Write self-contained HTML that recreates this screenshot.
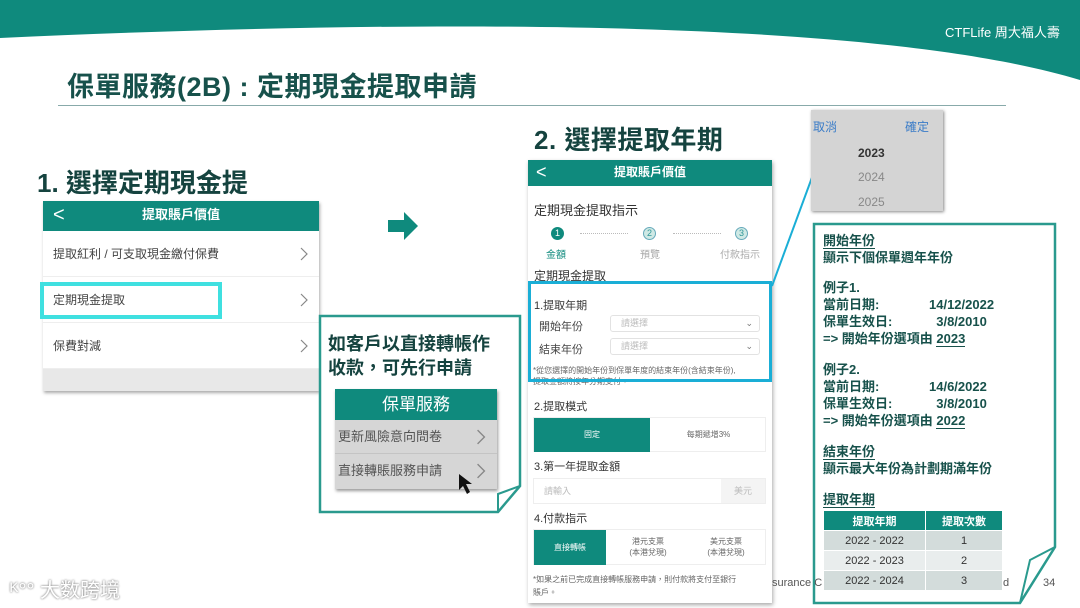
<!DOCTYPE html>
<html><head><meta charset="utf-8"><style>
*{margin:0;padding:0;box-sizing:border-box}
body{width:1080px;height:608px;position:relative;overflow:hidden;background:#fff;font-family:"Liberation Sans","Noto Sans CJK TC",sans-serif;color:#333}
.a{position:absolute}
.t{color:#17514b;font-weight:bold}
.teal{background:#0f8a7d}
.row{position:absolute;left:0;width:100%;font-size:12px;color:#444;border-bottom:1px solid #eee}
.chev{position:absolute;right:8px;top:50%;margin-top:-7px;width:14px;height:14px}
.rb{font-size:13px;font-weight:bold;color:#17514b;line-height:17px;position:absolute;left:823px}
u{text-decoration:none;border-bottom:1.5px solid #17514b}
</style></head><body>
<svg width="0" height="0" style="position:absolute"><defs><symbol id="cv" viewBox="0 0 14 14"><path d="M4 1L10 7L4 13" fill="none" stroke="#888" stroke-width="1.2"/></symbol></defs></svg>
<svg class="a" style="left:0;top:0" width="1080" height="90"><path d="M0 0H1080V80C900 25 500 15 0 38Z" fill="#0f8a7d"/></svg>
<div class="a" style="left:945px;top:22px;color:#fff;font-size:13px">CTF<span style="font-weight:300">Life</span> 周大福人壽</div>
<div class="a t" style="left:67px;top:65px;font-size:27px;letter-spacing:0.5px">保單服務(2B) : 定期現金提取申請</div>
<div class="a" style="left:58px;top:105px;width:948px;height:1px;background:#8aa"></div>
<div class="a t" style="left:37px;top:163px;font-size:26px;color:#15433f">1. 選擇定期現金提</div>
<div class="a t" style="left:534px;top:120px;font-size:26px;color:#15433f;letter-spacing:0.5px">2. 選擇提取年期</div>

<div class="a" style="left:43px;top:201px;width:276px;height:190px;box-shadow:1px 2px 3px #aaa;background:#fff">
<div class="teal" style="height:30px;color:#fff;font-size:13px;font-weight:bold;text-align:center;line-height:28px;position:relative">提取賬戶價值<span style="position:absolute;left:10px;font-size:20px;font-weight:normal">&lt;</span></div>
<div class="row" style="top:30px;height:46px;line-height:46px;padding-left:10px">提取紅利 / 可支取現金繳付保費<svg class="chev"><use href="#cv"/></svg></div>
<div class="row" style="top:76px;height:46px;line-height:46px;padding-left:10px">定期現金提取<svg class="chev"><use href="#cv"/></svg></div>
<div class="row" style="top:122px;height:46px;line-height:46px;padding-left:10px">保費對減<svg class="chev"><use href="#cv"/></svg></div>
<div class="a" style="top:168px;left:0;width:100%;height:22px;background:#e8e8e8"></div>
</div>
<div class="a" style="left:40px;top:282px;width:182px;height:37px;border:4px solid #3fe0e0"></div>

<svg class="a" style="left:388px;top:212px" width="32" height="28"><path d="M0 8H16V0L30 14L16 28V20H0Z" fill="#0f8a7d"/></svg>

<svg class="a" style="left:318px;top:314px" width="205" height="200"><path d="M2 2H202V172L180 198H2Z" fill="#fff" stroke="#2a9a8e" stroke-width="2.5"/><path d="M202 172L180 180L180 198" fill="none" stroke="#2a9a8e" stroke-width="2"/></svg>
<div class="a t" style="left:328px;top:332px;font-size:18px;line-height:24px;color:#15433f">如客戶以直接轉帳作<br>收款，可先行申請</div>
<div class="a" style="left:335px;top:389px;width:162px;height:100px;background:#d6d6d6;box-shadow:1px 2px 3px #999">
<div class="teal" style="height:31px;color:#fff;font-size:17px;text-align:center;line-height:31px">保單服務</div>
<div style="height:34px;line-height:34px;font-size:13px;color:#555;padding-left:3px;border-bottom:1px solid #c4c4c4;position:relative">更新風險意向問卷<svg class="chev" style="width:16px;height:16px;margin-top:-8px"><use href="#cv"/></svg></div>
<div style="height:34px;line-height:34px;font-size:13px;color:#555;padding-left:3px;position:relative">直接轉賬服務申請<svg class="chev" style="width:16px;height:16px;margin-top:-8px"><use href="#cv"/></svg></div>
</div>
<svg class="a" style="left:457px;top:472px" width="22" height="24"><path d="M2 2L2 18L6 14L10 22L13 20L9 12H15Z" fill="#111"/></svg>

<div class="a" style="left:528px;top:160px;width:244px;height:443px;background:#fff;box-shadow:1px 2px 4px #aaa;font-size:11px">
<div class="teal" style="height:26px;color:#fff;font-size:12px;font-weight:bold;text-align:center;line-height:24px;position:relative">提取賬戶價值<span style="position:absolute;left:8px;font-size:18px;font-weight:normal">&lt;</span></div>
<div class="a" style="left:6px;top:40px;font-size:13px;color:#333">定期現金提取指示</div>
<div class="a" style="left:23px;top:67px;width:13px;height:13px;border-radius:50%;background:#0f8a7d;color:#fff;font-size:9px;text-align:center;line-height:13px">1</div>
<div class="a" style="left:115px;top:67px;width:13px;height:13px;border-radius:50%;background:#cfe9e5;border:1px solid #6ab;color:#399;font-size:9px;text-align:center;line-height:11px">2</div>
<div class="a" style="left:207px;top:67px;width:13px;height:13px;border-radius:50%;background:#cfe9e5;border:1px solid #6ab;color:#399;font-size:9px;text-align:center;line-height:11px">3</div>
<div class="a" style="left:52px;top:73px;width:48px;border-top:1px dotted #bbb"></div>
<div class="a" style="left:145px;top:73px;width:48px;border-top:1px dotted #bbb"></div>
<div class="a" style="left:18px;top:86px;color:#0f8a7d;font-size:10px">金額</div>
<div class="a" style="left:112px;top:86px;color:#aaa;font-size:10px">預覽</div>
<div class="a" style="left:192px;top:86px;color:#aaa;font-size:10px">付款指示</div>
<div class="a" style="left:6px;top:107px;font-size:12px;color:#333">定期現金提取</div>
<div class="a" style="left:6px;top:137px;font-size:11px;color:#333">1.提取年期</div>
<div class="a" style="left:11px;top:158px;color:#444">開始年份</div>
<div class="a" style="left:82px;top:155px;width:150px;height:17px;border:1px solid #e2e2e2;border-radius:3px;color:#bbb;font-size:9px;padding-left:10px;line-height:15px">請選擇<span style="float:right;margin-right:6px;color:#777">⌄</span></div>
<div class="a" style="left:11px;top:181px;color:#444">結束年份</div>
<div class="a" style="left:82px;top:178px;width:150px;height:17px;border:1px solid #e2e2e2;border-radius:3px;color:#bbb;font-size:9px;padding-left:10px;line-height:15px">請選擇<span style="float:right;margin-right:6px;color:#777">⌄</span></div>
<div class="a" style="left:5px;top:205px;font-size:8px;color:#666;line-height:11px">*從您選擇的開始年份到保單年度的結束年份(含結束年份),<br>提取金額將按年分期支付。</div>
<div class="a" style="left:6px;top:238px;color:#333">2.提取模式</div>
<div class="a" style="left:5px;top:257px;width:233px;height:35px;border:1px solid #eee;font-size:8px">
<div class="teal" style="position:absolute;left:0;top:0;width:116px;height:34px;color:#fff;text-align:center;line-height:34px">固定</div>
<div style="position:absolute;left:116px;top:0;width:117px;text-align:center;line-height:34px;color:#666">每期遞增3%</div></div>
<div class="a" style="left:6px;top:298px;color:#333">3.第一年提取金額</div>
<div class="a" style="left:5px;top:318px;width:233px;height:26px;border:1px solid #eee;font-size:9px;color:#bbb;line-height:24px;padding-left:10px">請輸入<span style="position:absolute;right:0;top:0;width:44px;height:24px;background:#f4f4f4;text-align:center">美元</span></div>
<div class="a" style="left:6px;top:350px;color:#333">4.付款指示</div>
<div class="a" style="left:5px;top:369px;width:233px;height:36px;border:1px solid #eee;font-size:8px;color:#666;text-align:center">
<div class="teal" style="position:absolute;left:0;top:0;width:72px;height:35px;color:#fff;line-height:35px">直接轉帳</div>
<div style="position:absolute;left:76px;top:6px;width:76px;line-height:11px">港元支票<br>(本港兌現)</div>
<div style="position:absolute;left:154px;top:6px;width:76px;line-height:11px">美元支票<br>(本港兌現)</div></div>
<div class="a" style="left:5px;top:413px;font-size:8px;color:#666;line-height:13px">*如果之前已完成直接轉帳服務申請，則付款將支付至銀行<br>賬戶。</div>
</div>
<div class="a" style="left:528px;top:281px;width:244px;height:101px;border:3px solid #1aaed6"></div>
<svg class="a" style="left:770px;top:170px" width="46" height="120"><line x1="44" y1="2" x2="2" y2="116" stroke="#1aaed6" stroke-width="2"/></svg>

<div class="a" style="left:811px;top:110px;width:132px;height:101px;background:#d4d4d4;box-shadow:1px 1px 3px #888;font-size:12px">
<div class="a" style="left:2px;top:8px;color:#3a7cc8">取消</div><div class="a" style="left:94px;top:8px;color:#3a7cc8">確定</div>
<div class="a" style="left:47px;top:36px;color:#333;font-weight:bold">2023</div>
<div class="a" style="left:47px;top:60px;color:#888">2024</div>
<div class="a" style="left:47px;top:85px;color:#888">2025</div></div>

<svg class="a" style="left:812px;top:222px" width="246" height="384"><path d="M2 2H243V325L208 381H2Z" fill="#fff" stroke="#2a9a8e" stroke-width="2.5"/><path d="M243 325L218 338L208 381" fill="none" stroke="#2a9a8e" stroke-width="2"/></svg>
<div class="rb" style="top:232px"><u>開始年份</u><br>顯示下個保單週年年份</div>
<div class="rb" style="top:279px">例子1.<br>當前日期:<span class="a" style="left:106px">14/12/2022</span><br>保單生效日:<span class="a" style="left:106px;white-space:nowrap">&nbsp;&nbsp;3/8/2010</span><br>=&gt; 開始年份選項由 <u>2023</u></div>
<div class="rb" style="top:361px">例子2.<br>當前日期:<span class="a" style="left:106px">14/6/2022</span><br>保單生效日:<span class="a" style="left:106px;white-space:nowrap">&nbsp;&nbsp;3/8/2010</span><br>=&gt; 開始年份選項由 <u>2022</u></div>
<div class="rb" style="top:443px"><u>結束年份</u><br>顯示最大年份為計劃期滿年份</div>
<div class="rb" style="top:491px"><u>提取年期</u></div>
<table class="a" style="left:823px;top:510px;width:180px;border-collapse:collapse;font-size:11px;text-align:center">
<tr style="background:#0f8a7d;color:#fff;font-weight:bold;height:20px"><td style="border:1px solid #fff">提取年期</td><td style="border:1px solid #fff">提取次數</td></tr>
<tr style="background:#d3dcdb;height:20px;color:#333"><td style="border:1px solid #fff">2022 - 2022</td><td style="border:1px solid #fff">1</td></tr>
<tr style="background:#e9eded;height:20px;color:#333"><td style="border:1px solid #fff">2022 - 2023</td><td style="border:1px solid #fff">2</td></tr>
<tr style="background:#d3dcdb;height:20px;color:#333"><td style="border:1px solid #fff">2022 - 2024</td><td style="border:1px solid #fff">3</td></tr></table>
<div class="a" style="left:772px;top:577px;font-size:11px;color:#555">surance C</div>
<div class="a" style="left:1003px;top:577px;font-size:11px;color:#555">d</div>
<div class="a" style="left:1043px;top:577px;font-size:11px;color:#555">34</div>
<div class="a" style="left:10px;top:574px;font-size:20px;color:#fff;text-shadow:0 0 2px #999,0 0 2px #999">ᴷ°° 大数跨境</div>
</body></html>
